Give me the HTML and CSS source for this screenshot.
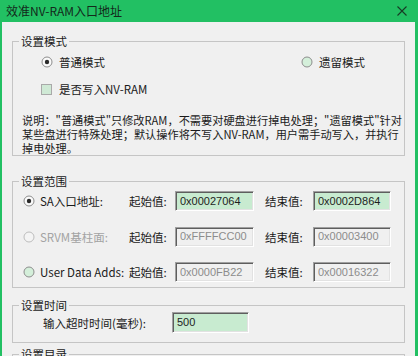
FILE: index.html
```html
<!DOCTYPE html>
<html lang="zh-CN">
<head>
<meta charset="utf-8">
<title>效准NV-RAM入口地址</title>
<link rel="stylesheet" href="styles.css">
</head>
<body>
<div class="window">
  <div class="titlebar">
    <span class="title">效准NV-RAM入口地址</span>
    <svg class="close" viewBox="0 0 10 10" width="10" height="10"><path d="M0.5 0.5 L9.5 9.5 M9.5 0.5 L0.5 9.5" stroke="#173b25" stroke-width="1.1" fill="none"/></svg>
  </div>
  <div class="body">
    <fieldset class="group g-mode">
      <legend>设置模式</legend>
      <div class="mode-row">
        <label class="opt">
          <svg class="radio" viewBox="0 0 12 12" width="12" height="12"><circle cx="6" cy="6" r="5" fill="#fafafa" stroke="#8d8d8d"/><circle cx="6" cy="6" r="2.2" fill="#2a2a2a"/></svg>
          <span>普通模式</span>
        </label>
        <label class="opt">
          <svg class="radio" viewBox="0 0 12 12" width="12" height="12"><circle cx="6" cy="6" r="5" fill="#d4efda" stroke="#8d8d8d"/></svg>
          <span>遗留模式</span>
        </label>
      </div>
      <label class="opt chk-row">
        <span class="checkbox"></span>
        <span>是否写入NV-RAM</span>
      </label>
      <p class="note">说明："普通模式"只修改RAM，不需要对硬盘进行掉电处理；"遗留模式"针对<br>某些盘进行特殊处理；默认操作将不写入NV-RAM，用户需手动写入，并执行<br>掉电处理。</p>
    </fieldset>

    <fieldset class="group g-range">
      <legend>设置范围</legend>
      <div class="range-grid">
        <label class="opt">
          <svg class="radio" viewBox="0 0 12 12" width="12" height="12"><circle cx="6" cy="6" r="5" fill="#fafafa" stroke="#8d8d8d"/><circle cx="6" cy="6" r="2.2" fill="#2a2a2a"/></svg>
          <span>SA入口地址:</span>
        </label>
        <span class="lbl">起始值:</span>
        <input class="field on" type="text" value="0x00027064" readonly>
        <span class="lbl end">结束值:</span>
        <input class="field on" type="text" value="0x0002D864" readonly>

        <label class="opt disabled">
          <svg class="radio" viewBox="0 0 12 12" width="12" height="12"><circle cx="6" cy="6" r="5" fill="#f4f4f4" stroke="#bdbdbd"/></svg>
          <span>SRVM基柱面:</span>
        </label>
        <span class="lbl">起始值:</span>
        <input class="field off" type="text" value="0xFFFFCC00" readonly>
        <span class="lbl end">结束值:</span>
        <input class="field off" type="text" value="0x00003400" readonly>

        <label class="opt">
          <svg class="radio" viewBox="0 0 12 12" width="12" height="12"><circle cx="6" cy="6" r="5" fill="#d4efda" stroke="#8d8d8d"/></svg>
          <span>User Data Adds:</span>
        </label>
        <span class="lbl">起始值:</span>
        <input class="field off" type="text" value="0x0000FB22" readonly>
        <span class="lbl end">结束值:</span>
        <input class="field off" type="text" value="0x00016322" readonly>
      </div>
    </fieldset>

    <fieldset class="group g-time">
      <legend>设置时间</legend>
      <div class="time-row">
        <span class="time-lbl">输入超时时间(毫秒):</span>
        <input class="field on time" type="text" value="500" readonly>
      </div>
    </fieldset>

    <fieldset class="group g-dir">
      <legend>设置目录</legend>
      <div class="dir-body"></div>
    </fieldset>
  </div>
</div>
</body>
</html>
```

FILE: styles.css
```css
* { box-sizing: border-box; }
html, body { margin: 0; padding: 0; }
body {
  width: 418px;
  height: 356px;
  overflow: hidden;
  font-family: "Noto Sans CJK SC", "Microsoft YaHei", sans-serif;
  font-size: 11.5px;
  color: #1a1a1a;
  background: #f0f0f0;
}
.window {
  height: 356px;
  display: flex;
  flex-direction: column;
}
.titlebar {
  height: 22px;
  flex-shrink: 0;
  background: #22c063;
  display: flex;
  align-items: center;
  justify-content: space-between;
  padding: 0 11px 1px 6px;
}
.title {
  font-size: 12px;
  line-height: 16px;
  color: #13291b;
}
.close { display: block; margin-top: 1px; }
.body {
  flex: 1;
  background: #f0f0f0;
  border-left: 2px solid #22c063;
  border-right: 3px solid #22c063;
  padding: 11px 10px 0;
  overflow: hidden;
}
.group {
  margin: 0;
  padding: 0;
  border: 1px solid #c5c5c5;
  min-width: 0;
}
.group legend {
  margin-left: 6px;
  padding: 0 2px;
  font-size: 11.5px;
  line-height: 16px;
  color: #1a1a1a;
}
.opt {
  display: flex;
  align-items: center;
  gap: 6px;
  height: 20px;
  white-space: nowrap;
}
.radio { display: block; flex-shrink: 0; }
.mode-row {
  display: grid;
  grid-template-columns: 260px auto;
  margin-top: 3px;
  padding-left: 28px;
}
.chk-row {
  margin-top: 7px;
  padding-left: 28px;
}
.checkbox {
  width: 11px;
  height: 11px;
  flex-shrink: 0;
  border: 1px solid #a9a9a9;
  background: #cfe9d5;
  margin-right: 1px;
}
.note {
  margin: 14px 0 0;
  padding: 0 0 0 9px;
  font-size: 11.2px;
  line-height: 14px;
  white-space: nowrap;
}
.g-range { margin-top: 17px; padding-bottom: 5px; }
.range-grid {
  display: grid;
  grid-template-columns: 106px 46px 79px 59px 78px;
  grid-auto-rows: 20px;
  row-gap: 15.5px;
  margin-top: 2px;
  padding-left: 10px;
  align-items: center;
}
.range-grid .opt { gap: 5px; }
.disabled { color: #a3a3a3; }
.lbl { white-space: nowrap; line-height: 20px; }
.lbl.end { padding-left: 11px; }
.field {
  width: 100%;
  height: 20px;
  margin: 0;
  padding: 0 0 1px 4px;
  font-family: "Liberation Sans", Arial, sans-serif;
  font-size: 11px;
  border-top: 1px solid #a0a0a0;
  border-left: 1px solid #a0a0a0;
  border-bottom: 1px solid #ffffff;
  border-right: 1px solid #ffffff;
  box-shadow: inset 1px 1px 0 #5e5e5e, inset -1px -1px 0 #e2e2e2;
  outline: none;
}
.field.on { background: #c8ebd0; color: #1e1e1e; }
.field.off { background: #f0f0f0; color: #8c8c8c; }
.g-time { margin-top: 9px; padding-bottom: 9px; }
.time-row {
  display: flex;
  align-items: center;
  margin-top: -1px;
  padding-left: 30px;
  height: 21px;
}
.time-lbl { width: 129px; white-space: nowrap; }
.field.time { width: 77px; height: 21px; }
.g-dir { margin-top: 3px; }
.dir-body { height: 40px; }
```
